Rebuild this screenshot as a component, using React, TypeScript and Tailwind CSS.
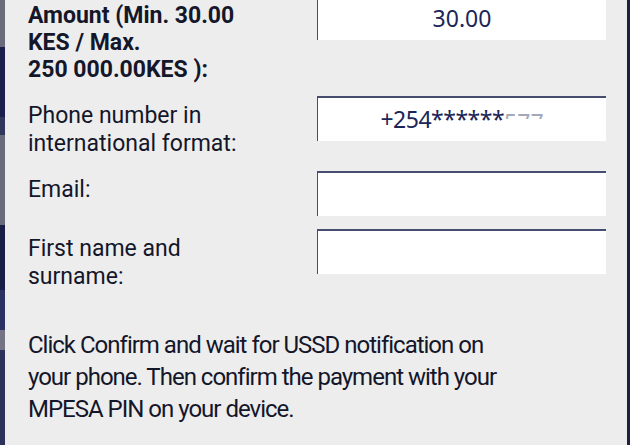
import type { ReactNode } from 'react';

const leftStrip = [
  { h: 'h-[47px]', c: 'bg-[#6c6b7b]' },
  { h: 'h-[70px]', c: 'bg-[#1b1f4b]' },
  { h: 'h-[18px]', c: 'bg-[#30365c]' },
  { h: 'h-[90px]', c: 'bg-[#6a6a7c]' },
  { h: 'h-[65px]', c: 'bg-[#1a1d48]' },
  { h: 'h-[40px]', c: 'bg-[#2b3160]' },
  { h: 'h-[20px]', c: 'bg-[#747484]' },
  { h: 'flex-1', c: 'bg-[#2c3259]' },
];

function Field({ children, className = '' }: { children?: ReactNode; className?: string }) {
  return (
    <div
      className={`w-[289px] h-[45px] shrink-0 bg-white border-t-2 border-l-[1.5px] border-[#474d70] flex items-center justify-center text-[23px] text-[#1b2558] ${className}`}
      style={{ fontFamily: '"Noto Sans", "Open Sans", sans-serif' }}
    >
      {children}
    </div>
  );
}

export default function App() {
  return (
    <div className="w-[630px] h-[445px] overflow-hidden flex bg-[#ededed]">
      {/* left backdrop strip */}
      <div className="w-[5px] flex flex-col shrink-0">
        {leftStrip.map((s, i) => (
          <div key={i} className={`${s.h} ${s.c}`} />
        ))}
      </div>

      <div
        className="flex-1 pl-[23px] pr-[21px] text-[#14162a]"
        style={{ fontFamily: 'Roboto, "Liberation Sans", sans-serif' }}
      >
        {/* Amount */}
        <div className="flex justify-between -mt-[5px]">
          <div className="pt-[7px] text-[23px] leading-[27px] font-bold">
            Amount (Min. 30.00
            <br />
            KES / Max.
            <br />
            250 000.00KES ):
          </div>
          <Field>30.00</Field>
        </div>

        {/* Phone */}
        <div className="flex justify-between mt-[13px]">
          <div className="pt-[6px] text-[23px] leading-[28px]">
            Phone number in
            <br />
            international format:
          </div>
          <Field>
            <span className="tracking-[-0.5px]">+254******</span>
            <span className="inline-block h-[5px] overflow-hidden leading-[16px] text-[#a4a8bb] self-start mt-[16px]">
              577
            </span>
          </Field>
        </div>

        {/* Email */}
        <div className="flex justify-between mt-[13px]">
          <div className="pt-[5px] text-[23px] leading-[28px]">Email:</div>
          <Field className="h-[44px]" />
        </div>

        {/* Name */}
        <div className="flex justify-between mt-[13px]">
          <div className="pt-[6px] text-[23px] leading-[28px]">
            First name and
            <br />
            surname:
          </div>
          <Field />
        </div>

        <p className="mt-[38px] text-[24px] leading-[32px] tracking-[-1px] whitespace-nowrap">
          Click Confirm and wait for USSD notification on
          <br />
          your phone. Then confirm the payment with your
          <br />
          MPESA PIN on your device.
        </p>
      </div>

      {/* right backdrop strip */}
      <div className="w-[3px] shrink-0 bg-[#1d2040]" />
    </div>
  );
}
